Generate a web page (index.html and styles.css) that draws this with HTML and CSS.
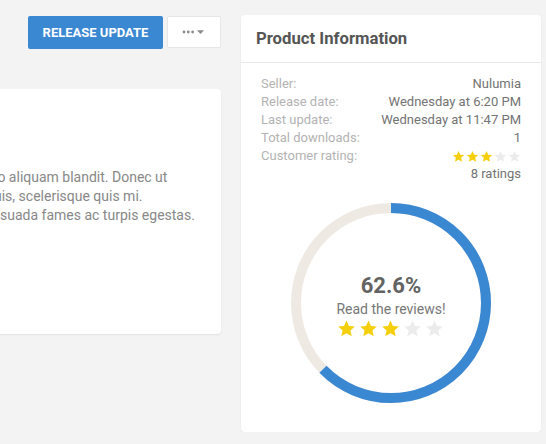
FILE: index.html
```html
<!DOCTYPE html>
<html lang="en">
<head>
<meta charset="utf-8">
<title>Product</title>
<link rel="stylesheet" href="styles.css">
</head>
<body>
<div class="page">
  <div class="main-col">
    <div class="toolbar">
      <button class="btn btn-primary">Release Update</button>
      <button class="btn btn-more" aria-label="More">
        <svg width="24" height="6" viewBox="0 0 24 6">
          <circle cx="2" cy="3" r="1.4" fill="#8a8a8a"/>
          <circle cx="6.3" cy="3" r="1.4" fill="#8a8a8a"/>
          <circle cx="10.6" cy="3" r="1.4" fill="#8a8a8a"/>
          <path d="M15 1.2 L22 1.2 L18.5 5 Z" fill="#8a8a8a"/>
        </svg>
      </button>
    </div>
    <div class="card desc-card">
      <p class="desc">
        <span class="line">lo aliquam blandit. Donec ut</span>
        <span class="line">uis, scelerisque quis mi.</span>
        <span class="line indent">suada fames ac turpis egestas.</span>
      </p>
    </div>
  </div>
  <aside class="card info-card">
    <div class="info-head">Product Information</div>
    <div class="info-body">
      <dl class="info-list">
        <div class="row"><dt>Seller:</dt><dd>Nulumia</dd></div>
        <div class="row"><dt>Release date:</dt><dd>Wednesday at 6:20 PM</dd></div>
        <div class="row"><dt>Last update:</dt><dd>Wednesday at 11:47 PM</dd></div>
        <div class="row"><dt>Total downloads:</dt><dd>1</dd></div>
        <div class="row"><dt>Customer rating:</dt>
          <dd class="stars small">
            <svg viewBox="0 0 24 24" class="star on"><path d="M12 1.8l3.1 6.9 7.4.7-5.6 5 1.7 7.4L12 18l-6.6 3.8 1.7-7.4-5.6-5 7.4-.7z"/></svg>
            <svg viewBox="0 0 24 24" class="star on"><path d="M12 1.8l3.1 6.9 7.4.7-5.6 5 1.7 7.4L12 18l-6.6 3.8 1.7-7.4-5.6-5 7.4-.7z"/></svg>
            <svg viewBox="0 0 24 24" class="star on"><path d="M12 1.8l3.1 6.9 7.4.7-5.6 5 1.7 7.4L12 18l-6.6 3.8 1.7-7.4-5.6-5 7.4-.7z"/></svg>
            <svg viewBox="0 0 24 24" class="star"><path d="M12 1.8l3.1 6.9 7.4.7-5.6 5 1.7 7.4L12 18l-6.6 3.8 1.7-7.4-5.6-5 7.4-.7z"/></svg>
            <svg viewBox="0 0 24 24" class="star"><path d="M12 1.8l3.1 6.9 7.4.7-5.6 5 1.7 7.4L12 18l-6.6 3.8 1.7-7.4-5.6-5 7.4-.7z"/></svg>
          </dd>
        </div>
        <div class="row"><dt></dt><dd>8 ratings</dd></div>
      </dl>
      <div class="gauge">
        <svg class="ring" width="200" height="200" viewBox="0 0 200 200">
          <circle cx="100" cy="100" r="95" fill="none" stroke="#efe9e3" stroke-width="10"/>
          <circle cx="100" cy="100" r="95" fill="none" stroke="#3a87d2" stroke-width="10"
                  stroke-dasharray="373.7 596.9" transform="rotate(-90 100 100)"/>
        </svg>
        <div class="gauge-center">
          <div class="pct">62.6%</div>
          <div class="reviews">Read the reviews!</div>
          <div class="stars big">
            <svg viewBox="0 0 24 24" class="star on"><path d="M12 1.8l3.1 6.9 7.4.7-5.6 5 1.7 7.4L12 18l-6.6 3.8 1.7-7.4-5.6-5 7.4-.7z"/></svg>
            <svg viewBox="0 0 24 24" class="star on"><path d="M12 1.8l3.1 6.9 7.4.7-5.6 5 1.7 7.4L12 18l-6.6 3.8 1.7-7.4-5.6-5 7.4-.7z"/></svg>
            <svg viewBox="0 0 24 24" class="star on"><path d="M12 1.8l3.1 6.9 7.4.7-5.6 5 1.7 7.4L12 18l-6.6 3.8 1.7-7.4-5.6-5 7.4-.7z"/></svg>
            <svg viewBox="0 0 24 24" class="star"><path d="M12 1.8l3.1 6.9 7.4.7-5.6 5 1.7 7.4L12 18l-6.6 3.8 1.7-7.4-5.6-5 7.4-.7z"/></svg>
            <svg viewBox="0 0 24 24" class="star"><path d="M12 1.8l3.1 6.9 7.4.7-5.6 5 1.7 7.4L12 18l-6.6 3.8 1.7-7.4-5.6-5 7.4-.7z"/></svg>
          </div>
        </div>
      </div>
    </div>
  </aside>
</div>
</body>
</html>
```
FILE: styles.css
```css
html, body {
  margin: 0;
  padding: 0;
  background: #f3f3f3;
  overflow: hidden;
}
body {
  font-family: Roboto, "Liberation Sans", sans-serif;
  color: #777;
}
.page {
  display: flex;
  align-items: flex-start;
  gap: 20px;
}
.main-col {
  flex: 0 0 227px;
  margin-left: -6px;
  display: flex;
  flex-direction: column;
}
.toolbar {
  display: flex;
  justify-content: flex-end;
  align-items: flex-start;
  gap: 4px;
  margin-top: 16px;
}
.btn {
  font-family: Roboto, "Liberation Sans", sans-serif;
  border-radius: 2px;
  cursor: pointer;
  margin: 0;
}
.btn-primary {
  height: 33px;
  width: 135px;
  padding: 0;
  background: #3a87d2;
  border: none;
  color: #fff;
  font-size: 13px;
  font-weight: 700;
  text-transform: uppercase;
}
.btn-more {
  height: 32px;
  width: 54px;
  padding: 0;
  background: #fff;
  border: 1px solid #e6e6e6;
  display: flex;
  align-items: center;
  justify-content: center;
}
.card {
  background: #fff;
  border-radius: 4px;
  box-shadow: 0 1px 2px rgba(0,0,0,0.07);
}
.desc-card {
  margin-top: 40px;
  height: 245px;
  padding: 79px 24px 0 0;
  box-sizing: border-box;
  border-radius: 0 4px 4px 0;
}
.desc {
  margin: 0;
  font-size: 14px;
  line-height: 19px;
  color: #888;
  white-space: nowrap;
}
.line {
  display: block;
}
.line.indent {
  padding-left: 6px;
}
.info-card {
  flex: 0 0 300px;
  margin-top: 15px;
  height: 417px;
  box-sizing: border-box;
}
.info-head {
  height: 48px;
  box-sizing: border-box;
  padding: 0 15px;
  display: flex;
  align-items: center;
  font-size: 16.7px;
  font-weight: 700;
  color: #555;
  border-bottom: 1px solid #e8e8e8;
}
.info-body {
  padding: 12px 20px 0;
}
.info-list {
  margin: 0;
  font-size: 13px;
  line-height: 18px;
}
.row {
  display: flex;
  justify-content: space-between;
}
dt {
  color: #b3b3b3;
}
dd {
  margin: 0;
  color: #737373;
}
.stars {
  display: flex;
  align-items: center;
}
.stars .star {
  fill: #ececec;
}
.stars .star.on {
  fill: #f5cf0a;
}
.stars.small {
  gap: 1px;
}
.stars.small .star {
  width: 13px;
  height: 13px;
}
.gauge {
  margin: 20px auto 0;
  width: 200px;
  height: 200px;
  display: grid;
  place-items: center;
}
.ring, .gauge-center {
  grid-area: 1 / 1;
}
.gauge-center {
  display: flex;
  flex-direction: column;
  align-items: center;
  margin-top: 4px;
}
.pct {
  font-size: 22px;
  font-weight: 700;
  color: #636363;
  line-height: 26px;
}
.reviews {
  font-size: 14px;
  color: #777;
  line-height: 18px;
  margin-top: 1px;
}
.stars.big {
  gap: 3px;
  margin-top: 1px;
}
.stars.big .star {
  width: 19px;
  height: 19px;
}
```
